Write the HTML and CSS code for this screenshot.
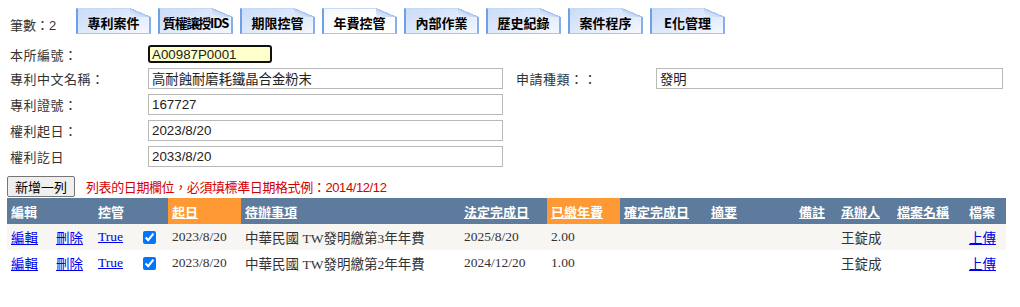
FILE: index.html
```html
<!DOCTYPE html>
<html lang="zh-Hant">
<head>
    <meta charset="UTF-8">
    <title>專利案件</title>
    <link rel="stylesheet" href="styles.css">
</head>
<body>

    <div class="topbar">
        <span class="count">筆數：2</span>
        <nav class="tabs">
            <a class="tab">專利案件</a>
            <a class="tab tight">質權讓授IDS</a>
            <a class="tab">期限控管</a>
            <a class="tab active">年費控管</a>
            <a class="tab">內部作業</a>
            <a class="tab">歷史紀錄</a>
            <a class="tab">案件程序</a>
            <a class="tab">E化管理</a>
        </nav>
    </div>

    <div class="form">
        <label>本所編號：</label>
        <input class="key" value="A00987P0001">
        <span></span><span></span><span></span>

        <label>專利中文名稱：</label>
        <input value="高耐蝕耐磨耗鐵晶合金粉末">
        <span></span>
        <label>申請種類：：</label>
        <input value="發明">

        <label>專利證號：</label>
        <input value="167727">
        <span></span><span></span><span></span>

        <label>權利起日：</label>
        <input value="2023/8/20">
        <span></span><span></span><span></span>

        <label>權利訖日</label>
        <input value="2033/8/20">
        <span></span><span></span><span></span>
    </div>

    <div class="actions">
        <button>新增一列</button>
        <span class="hint">列表的日期欄位，必須填標準日期格式例：2014/12/12</span>
    </div>

    <table class="grid">
        <colgroup>
            <col style="width:45px"><col style="width:42px"><col style="width:44px"><col style="width:30px">
            <col style="width:73px"><col style="width:219px"><col style="width:87px"><col style="width:73px">
            <col style="width:87px"><col style="width:88px"><col style="width:42px"><col style="width:56px">
            <col style="width:72px"><col style="width:41px">
        </colgroup>
        <thead>
            <tr>
                <th colspan="2">編輯</th>
                <th colspan="2">控管</th>
                <th class="sorted"><a>起日</a></th>
                <th><a>待辦事項</a></th>
                <th><a>法定完成日</a></th>
                <th class="sorted"><a>已繳年費</a></th>
                <th><a>確定完成日</a></th>
                <th><a>摘要</a></th>
                <th><a>備註</a></th>
                <th><a>承辦人</a></th>
                <th><a>檔案名稱</a></th>
                <th>檔案</th>
            </tr>
        </thead>
        <tbody>
            <tr class="odd">
                <td><a href="#">編輯</a></td>
                <td><a href="#">刪除</a></td>
                <td><a href="#">True</a></td>
                <td><input type="checkbox" checked></td>
                <td>2023/8/20</td>
                <td>中華民國 TW發明繳第3年年費</td>
                <td>2025/8/20</td>
                <td>2.00</td>
                <td></td>
                <td></td>
                <td></td>
                <td>王錠成</td>
                <td></td>
                <td><a href="#">上傳</a></td>
            </tr>
            <tr>
                <td><a href="#">編輯</a></td>
                <td><a href="#">刪除</a></td>
                <td><a href="#">True</a></td>
                <td><input type="checkbox" checked></td>
                <td>2023/8/20</td>
                <td>中華民國 TW發明繳第2年年費</td>
                <td>2024/12/20</td>
                <td>1.00</td>
                <td></td>
                <td></td>
                <td></td>
                <td>王錠成</td>
                <td></td>
                <td><a href="#">上傳</a></td>
            </tr>
        </tbody>
    </table>

</body>
</html>
```

FILE: styles.css
```css
* {
  box-sizing: border-box;
}

body {
    margin: 0;
    font-family: "Liberation Sans", "Noto Sans CJK TC", sans-serif;
    font-size: 13px;
    color: #222;
    background: #fff;
}

/* top bar with tabs */
.topbar {
    display: flex;
    align-items: flex-end;
    height: 40px;
    padding: 0 0 6px 10px;
}

.count {
    width: 66px;
    line-height: 16px;
    color: #333;
}

.tabs {
    display: flex;
    gap: 7px;
}

.tab {
    position: relative;
    display: flex;
    align-items: center;
    justify-content: center;
    width: 75px;
    height: 26px;
    padding-top: 2px;
    font-family: "Noto Sans CJK TC", sans-serif;
    font-weight: bold;
    font-size: 13px;
    color: #000;
    background: linear-gradient(160deg, #cadcf8 0%, #e0eafb 55%, #f4f8fe 100%);
    border-left: 2px solid #6f9fe6;
    border-right: 2px solid #86aeeb;
    border-bottom: 1px solid #a9c4ef;
    border-top: 1px solid #c8d9f4;
}

.tab.active {
    background: linear-gradient(160deg, #f4f7fd 0%, #fff 60%);
}

.tab.tight {
    letter-spacing: -1.2px;
}

/* folded corner */
.tab::after {
    content: "";
    position: absolute;
    top: -1px;
    right: -2px;
    width: 21px;
    height: 9px;
    background: linear-gradient(to bottom left, #fff 49%, #9dbdee 50%, #c9dbf6 62%, #e9f0fc 100%);
}

/* form */
.form {
    display: grid;
    grid-template-columns: 138px 355px 13px 140px 347px;
    grid-template-rows: 18px repeat(4, 21px);
    row-gap: 5px;
    align-items: center;
    padding: 5px 0 0 10px;
}

.form label {
    color: #333;
    letter-spacing: 0.5px;
}

.form input {
    height: 21px;
    padding: 0 3px;
    border: 1px solid #b9b9b9;
    font-family: "Liberation Sans", "Noto Sans CJK TC", sans-serif;
    font-size: 13.33px;
    color: #222;
    background: #fff;
}

.form input.key {
    width: 124px;
    height: 18px;
    padding: 0 2px;
    border: 2px solid #111;
    border-radius: 3px;
    background: #ffffcc;
}

/* actions */
.actions {
    display: flex;
    align-items: center;
    gap: 11px;
    margin: 9px 0 1px 7px;
}

.actions button {
    width: 68px;
    height: 21px;
    padding: 0;
    font-family: "Noto Sans CJK TC", sans-serif;
    font-size: 13px;
    color: #000;
    background: #efefef;
    border: 1px solid #767676;
    border-radius: 2px;
}

.hint {
    color: #d40000;
    font-size: 13px;
    letter-spacing: -0.4px;
}

/* grid */
.grid {
    margin-left: 7px;
    width: 999px;
    table-layout: fixed;
    border-collapse: collapse;
}

.grid th {
    height: 26px;
    padding: 0 4px;
    text-align: left;
    font-family: "Noto Sans CJK TC", sans-serif;
    font-weight: bold;
    font-size: 13px;
    color: #fff;
    background: #5d7b9d;
    white-space: nowrap;
}

.grid th a {
    color: #fff;
    text-decoration: underline;
}

.grid th.sorted {
    background: #ff9933;
}

.grid td {
    height: 26px;
    padding: 0 4px;
    font-family: "Liberation Serif", "Noto Sans CJK TC", serif;
    font-size: 13.5px;
    color: #333;
    white-space: nowrap;
}

.grid tr.odd td {
    background: #f7f6f3;
}

.grid td a {
    color: #0000ee;
}

.grid td input[type="checkbox"] {
    margin: 0 0 0 1px;
    width: 13px;
    height: 13px;
    vertical-align: middle;
}
```
